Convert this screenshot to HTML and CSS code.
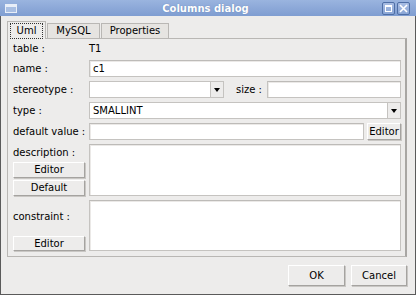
FILE: index.html
```html
<!DOCTYPE html>
<html lang="en">
<head>
    <meta charset="UTF-8">
    <title>Columns dialog</title>
    <link rel="stylesheet" href="styles.css">
</head>
<body>
    <div class="window">
        <div class="titlebar">
            <span class="win-icon"></span>
            <span class="title">Columns dialog</span>
            <span class="win-btns">
                <span class="wbtn"><span class="maxbox"></span></span>
                <span class="wbtn">
                    <svg width="9" height="9" viewBox="0 0 9 9"><path d="M1 1L8 8M8 1L1 8" stroke="#fff" stroke-width="1.6"/></svg>
                </span>
            </span>
        </div>

        <div class="body">
            <div class="tabs">
                <div class="tab active"><span class="focus">Uml</span></div>
                <div class="tab tab-mysql">MySQL</div>
                <div class="tab tab-props">Properties</div>
            </div>

            <div class="pane">
                <div class="row first">
                    <span class="lbl">table :</span>
                    <span class="val">T1</span>
                </div>
                <div class="row">
                    <span class="lbl">name :</span>
                    <div class="input grow">c1</div>
                </div>
                <div class="row">
                    <span class="lbl">stereotype :</span>
                    <div class="combo stereo"><span class="txt"></span><span class="arrow"></span></div>
                    <span class="size-lbl">size :</span>
                    <div class="input grow"></div>
                </div>
                <div class="row">
                    <span class="lbl">type :</span>
                    <div class="combo grow"><span class="txt">SMALLINT</span><span class="arrow"></span></div>
                </div>
                <div class="row">
                    <span class="lbl">default value :</span>
                    <div class="input grow"></div>
                    <button class="btn small">Editor</button>
                </div>
                <div class="row area-row desc">
                    <div class="side">
                        <span class="lbl">description :</span>
                        <button class="btn side-btn">Editor</button>
                        <button class="btn side-btn">Default</button>
                    </div>
                    <div class="input area grow"></div>
                </div>
                <div class="row area-row cons">
                    <div class="side">
                        <span class="lbl">constraint :</span>
                        <button class="btn side-btn">Editor</button>
                    </div>
                    <div class="input area grow"></div>
                </div>
            </div>

            <div class="footer">
                <button class="btn big ok">OK</button>
                <button class="btn big">Cancel</button>
            </div>
        </div>
    </div>
</body>
</html>
```

FILE: styles.css
```css
*{
    box-sizing: border-box;
    margin: 0;
    padding: 0;
}

body{
    width: 416px;
    height: 295px;
    font-family: 'DejaVu Sans', sans-serif;
    font-size: 10px;
    color: #000;
    background: #edeceb;
}

.window{
    width: 416px;
    height: 295px;
    border: 1px solid #5a5a5a;
    border-top: 0;
    background: #edeceb;
    display: flex;
    flex-direction: column;
}

.titlebar{
    height: 17px;
    background: linear-gradient(#9ab4df, #7f9dd1);
    display: flex;
    align-items: center;
    margin: 0 -1px;
}

.win-icon{
    width: 12px;
    height: 9px;
    margin-left: 5px;
    border: 1px solid #e8eef8;
    border-top-width: 3px;
    background: #a9bfe3;
}

.title{
    flex: 1;
    text-align: center;
    color: #fff;
    font-weight: bold;
    font-size: 10px;
    text-shadow: 0 0 1px #5b78aa;
    margin-left: 12px;
}

.win-btns{
    display: flex;
    gap: 2px;
    margin-right: 6px;
}

.wbtn{
    width: 13px;
    height: 13px;
    border: 1px solid #4f6fa6;
    border-radius: 2px;
    background: linear-gradient(#a8bde3, #8aa6d6);
    display: flex;
    align-items: center;
    justify-content: center;
}

.maxbox{
    width: 7px;
    height: 7px;
    border: 1px solid #fff;
    border-top-width: 2px;
}

.body{
    flex: 1;
    padding: 5px 8px 8px 6px;
    display: flex;
    flex-direction: column;
}

.tabs{
    display: flex;
    height: 17px;
}

.tab{
    border: 1px solid #b9b7b4;
    border-bottom: 0;
    background: #e6e4e1;
    text-align: center;
    line-height: 14px;
    margin-top: 2px;
    margin-left: 1px;
}

.tab.active{
    width: 39px;
    background: #edeceb;
    margin: 0;
    padding: 1px 2px 0;
    height: 18px;
    position: relative;
    z-index: 1;
}

.tab-mysql{
    width: 53px;
}

.tab-props{
    width: 68px;
}

.focus{
    display: block;
    border: 1px dotted #333;
    line-height: 14px;
}

.pane{
    border: 1px solid #b9b7b4;
    border-right: 2px solid #a8a6a3;
    height: 219px;
    padding: 2px 4px 0 5px;
    display: flex;
    flex-direction: column;
    gap: 4px;
}

.row{
    display: flex;
    align-items: center;
    height: 17px;
    flex: none;
}

.row.first{
    height: 15px;
}

.lbl{
    width: 76px;
    flex: none;
}

.grow{
    flex: 1;
}

.input{
    height: 17px;
    background: #fff;
    border: 1px solid #c5c3c0;
    border-top-color: #bdbbb8;
    box-shadow: inset 1px 1px 0 #ebe9e7;
    padding: 0 3px;
    line-height: 15px;
}

.combo{
    height: 17px;
    background: #fff;
    border: 1px solid #c5c3c0;
    display: flex;
    align-items: center;
    padding-left: 3px;
}

.combo .txt{
    flex: 1;
}

.stereo{
    width: 135px;
    flex: none;
}

.arrow{
    width: 13px;
    height: 15px;
    background: #edeceb;
    border-left: 1px solid #c5c3c0;
    position: relative;
}

.arrow::after{
    content: '';
    position: absolute;
    left: 3px;
    top: 6px;
    border-left: 3px solid transparent;
    border-right: 3px solid transparent;
    border-top: 4px solid #000;
}

.size-lbl{
    margin: 0 5px 0 12px;
}

.btn{
    font-family: 'DejaVu Sans', sans-serif;
    font-size: 10px;
    color: #000;
    background: #edeceb;
    border: 1px solid;
    border-color: #fff #a5a3a0 #a5a3a0 #fff;
    box-shadow: 1px 1px 0 #c9c7c4;
}

.btn.small{
    width: 34px;
    height: 17px;
    margin-left: 3px;
}

.area-row{
    align-items: stretch;
}

.desc{
    height: 52px;
}

.cons{
    height: 51px;
}

.area{
    height: auto;
}

.side{
    width: 76px;
    flex: none;
    display: flex;
    flex-direction: column;
}

.side .lbl{
    line-height: 12px;
}

.desc .lbl{
    margin-top: 3px;
}

.cons .lbl{
    margin-top: 11px;
}

.side-btn{
    width: 72px;
    height: 16px;
    margin-top: 3px;
    line-height: 14px;
}

.desc .side-btn + .side-btn{
    margin-top: 2px;
}

.cons .side-btn{
    margin-top: 13px;
    height: 15px;
}

.footer{
    display: flex;
    justify-content: flex-end;
    gap: 6px;
    margin-top: 8px;
}

.btn.big{
    height: 21px;
    width: 56px;
}

.btn.big.ok{
    width: 57px;
}
```
